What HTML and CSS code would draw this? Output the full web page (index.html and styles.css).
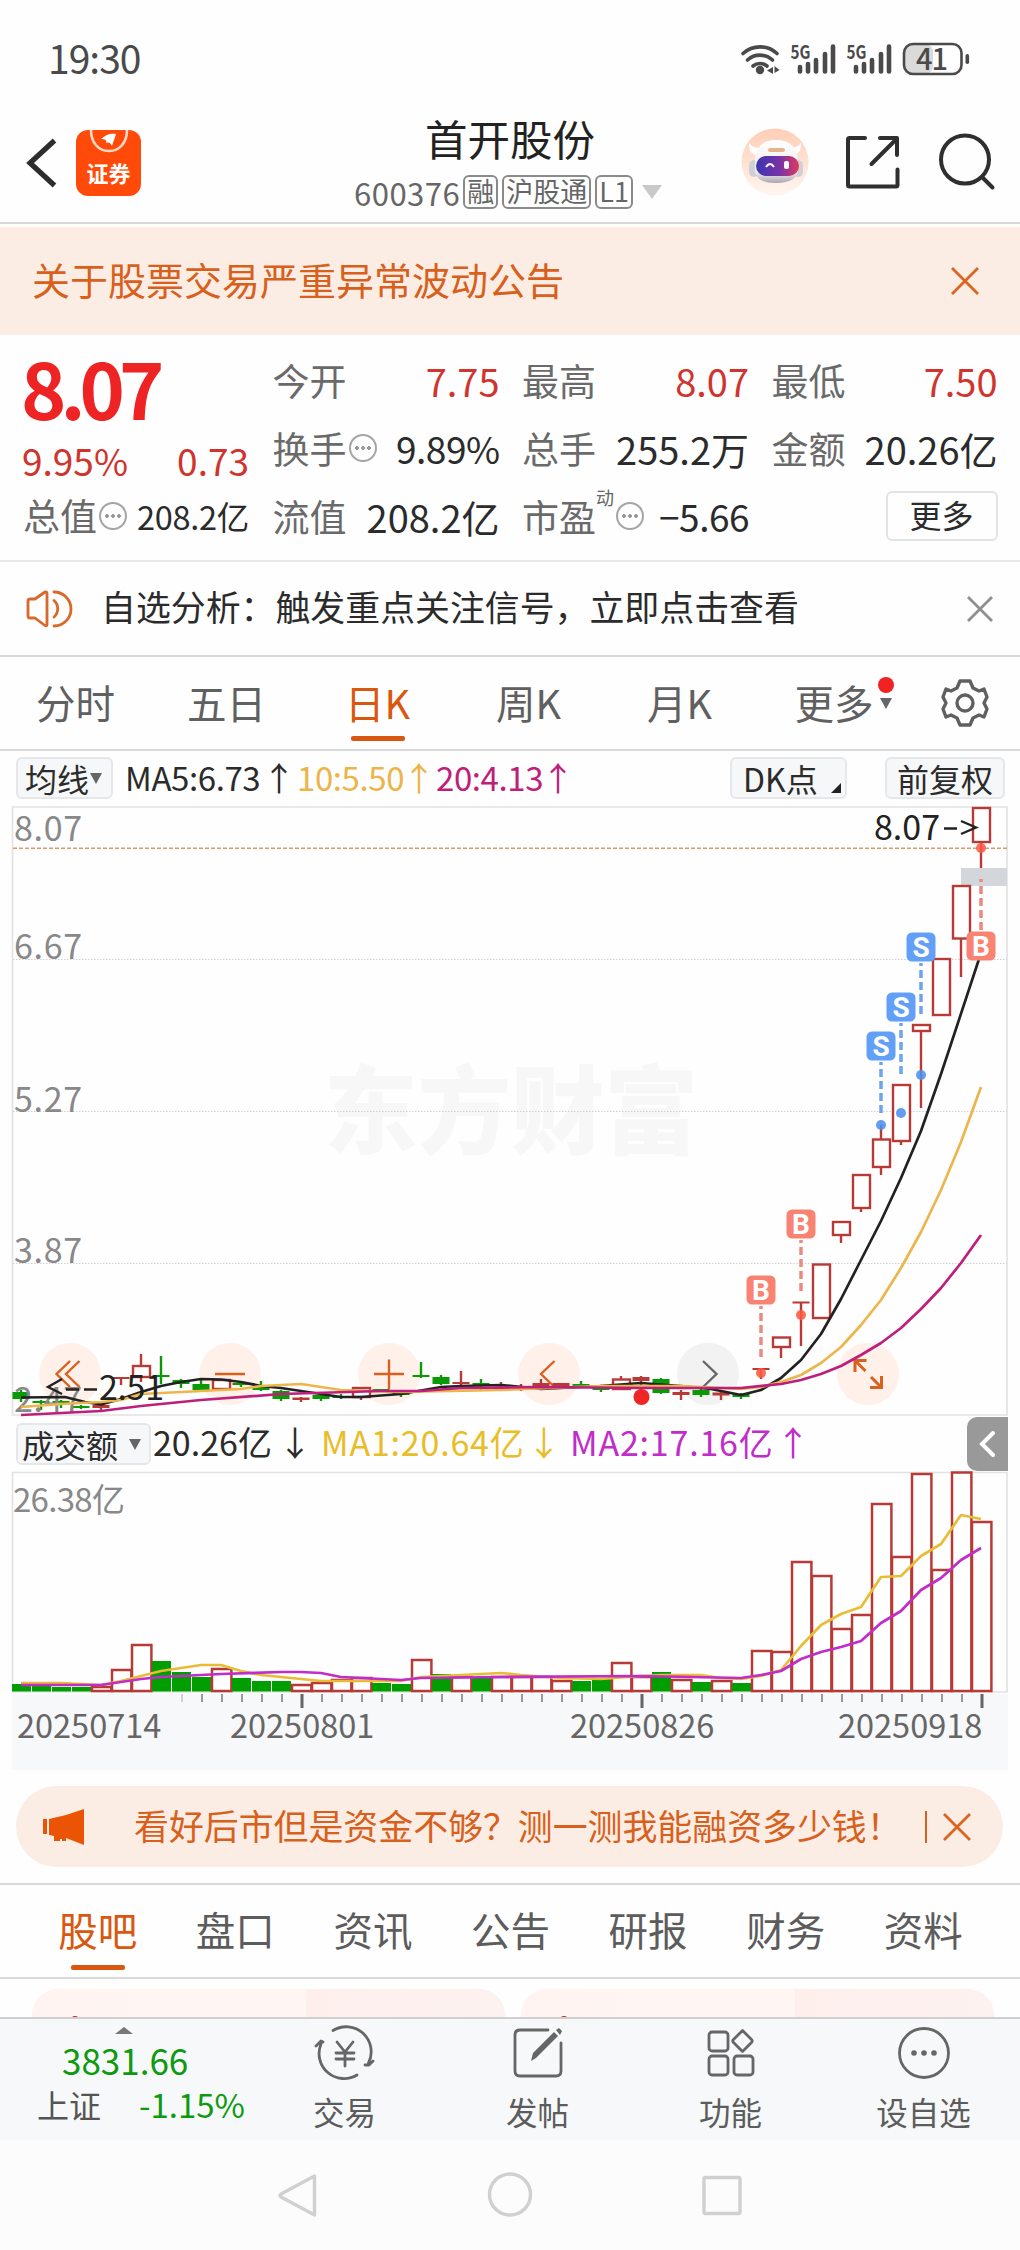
FILE: index.html
```html
<!DOCTYPE html>
<html lang="zh-CN">
<head>
<meta charset="utf-8">
<title>首开股份 600376</title>
<link rel="stylesheet" href="styles.css">
</head>
<body>
<div class="statusbar">
  <span class="clock">19:30</span>
  <svg class="status-icons" width="240" height="52" viewBox="730 28 240 52">
    <g fill="none" stroke="#4a4a4a" stroke-width="3.6" stroke-linecap="round">
      <path d="M743 53.500a25 25 0 0 1 34 0M747.500 60a18.500 18.500 0 0 1 25 0M753 66a11 11 0 0 1 14 0"/>
    </g>
    <circle cx="760" cy="70" r="4.200" fill="#4a4a4a"/>
    <path d="M773 67v7l-6-3.500zM774.500 66v7l5-3z" fill="#4a4a4a"/>
    <g id="sig">
      <text x="790.500" y="58.500" class="five-g" textLength="20" lengthAdjust="spacingAndGlyphs">5G</text>
      <path d="M800 67v4.500M808 64v7.500M816 60v11.500M825 54v17.500M833 46.500v25" stroke="#4a4a4a" stroke-width="4.600" stroke-linecap="round"/>
    </g>
    <use href="#sig" x="56"/>
    <rect x="904" y="44.500" width="29" height="29" rx="7" fill="#dadada"/>
    <rect x="904" y="44" width="57.500" height="30" rx="9" fill="none" stroke="#4a4a4a" stroke-width="2.600"/>
    <rect x="965.500" y="54" width="3.600" height="10" rx="1.800" fill="#4a4a4a"/>
    <text x="916" y="69.500" class="battery">41</text>
  </svg>
</div>

<header class="header">
  <svg class="back" width="34" height="54" viewBox="0 0 34 54"><path d="M29.500 4.500L5 27l24.500 22.500" fill="none" stroke="#2d2d2d" stroke-width="5.200"/></svg>
  <div class="logo">
    <svg width="65" height="28" viewBox="0 0 65 28"><path d="M15 0c0 12 7 21 18 21S51 12 51 0" fill="none" stroke="#ffd9c4" stroke-width="2.600"/><path d="M25 9C30 4 35 3 40 4C39 8 37 12 36 16C34.500 13 33 11.500 30 13C31 10 29 9 25 9z" fill="#fff"/></svg>
    <span>证券</span>
  </div>
  <div class="heading">
    <div class="name">首开股份</div>
    <div class="code"><span class="num">600376</span><span class="tag">融</span><span class="tag">沪股通</span><span class="tag">L1</span><i class="tri-down"></i></div>
  </div>
  <svg class="robot" width="68" height="68" viewBox="0 0 68 68">
    <defs>
      <linearGradient id="halo" x1="0" y1="0" x2="0" y2="1"><stop offset="0" stop-color="#ffcdb5"/><stop offset="1" stop-color="#fff6f1"/></linearGradient>
      <linearGradient id="visor" x1="0" y1="0" x2="1" y2="0"><stop offset="0" stop-color="#3a35b0"/><stop offset=".55" stop-color="#7a32a8"/><stop offset="1" stop-color="#e03a5c"/></linearGradient>
      <linearGradient id="shell" x1="0" y1="0" x2="0" y2="1"><stop offset="0" stop-color="#fff"/><stop offset=".75" stop-color="#efecef"/><stop offset="1" stop-color="#a9a4ad"/></linearGradient>
    </defs>
    <circle cx="34" cy="34" r="33.500" fill="url(#halo)"/>
    <path d="M8 15c0 8 2 11 8 12l5-7c-7 0-10-1-13-5zM60 15c0 8-2 11-8 12l-5-7c7 0 10-1 13-5z" fill="#fff"/>
    <rect x="8" y="32" width="10" height="17" rx="5" fill="#d2cfd4"/><rect x="52" y="32" width="10" height="17" rx="5" fill="#d2cfd4"/>
    <path d="M14 34c0-14 7-22 21-22s22 8 22 22v8c0 8-8 13-22 13S14 50 14 42z" fill="url(#shell)"/>
    <rect x="27" y="20" width="17" height="4" rx="2" fill="#e5b48c"/>
    <rect x="15" y="28" width="43" height="20" rx="10" fill="url(#visor)"/>
    <path d="M25 39q4-6 8 0" fill="none" stroke="#fff" stroke-width="2"/><rect x="43" y="33" width="5" height="8" rx="2" fill="#fff"/>
  </svg>
  <svg class="share" width="60" height="60" viewBox="842 130 60 60"><g fill="none" stroke="#2f2f2f" stroke-width="4" stroke-linecap="round" stroke-linejoin="round"><path d="M865 138h-15.500q-1.500 0-1.500 1.500v45.500q0 1.500 1.500 1.500H896q1.500 0 1.500-1.500V169.500M880 138h17v17M896 139.500L871.500 164"/></g></svg>
  <svg class="search" width="60" height="60" viewBox="938 130 60 60"><g fill="none" stroke="#2f2f2f" stroke-width="4" stroke-linecap="round"><circle cx="965" cy="159.500" r="24"/><path d="M982.500 177.500l10 10"/></g></svg>
</header>

<div class="announce">
  <span>关于股票交易严重异常波动公告</span>
  <svg width="28" height="28" viewBox="0 0 28 28"><path d="M1 1l26 26M27 1L1 27" stroke="#dd6320" stroke-width="2.800"/></svg>
</div>

<section class="quote">
  <div class="col first">
    <div class="price">8.07</div>
    <div class="row red chg"><span>9.95%</span><span>0.73</span></div>
    <div class="row total"><label>总值</label><i class="dots"></i><b class="small">208.2亿</b></div>
  </div>
  <div class="col">
    <div class="row"><label>今开</label><b class="red">7.75</b></div>
    <div class="row"><label>换手</label><i class="dots"></i><b class="rate">9.89%</b></div>
    <div class="row"><label>流值</label><b>208.2亿</b></div>
  </div>
  <div class="col">
    <div class="row"><label>最高</label><b class="red">8.07</b></div>
    <div class="row"><label>总手</label><b>255.2万</b></div>
    <div class="row"><label>市盈</label><sup>动</sup><i class="dots"></i><b class="rate">−5.66</b></div>
  </div>
  <div class="col">
    <div class="row"><label>最低</label><b class="red">7.50</b></div>
    <div class="row"><label>金额</label><b>20.26亿</b></div>
    <div class="row"><span class="more">更多</span></div>
  </div>
</section>

<div class="notice">
  <svg width="48" height="42" viewBox="0 0 48 42"><g fill="none" stroke="#d9692a" stroke-width="2.800" stroke-linejoin="round" stroke-linecap="round"><path d="M20 4L10 11H5q-2 0-2 2v15q0 2 2 2h5l10 7.500q2 1 2-1V5.500q0-2-2-1.500z"/><path d="M29 12.500a11 11 0 0 1 0 16.500M29 4a17 17 0 0 1 0 34"/></g></svg>
  <span>自选分析：触发重点关注信号，立即点击查看</span>
  <svg width="28" height="28" viewBox="0 0 28 28"><path d="M2 2l24 24M26 2L2 26" stroke="#8f8f8f" stroke-width="2.800"/></svg>
</div>

<nav class="periods">
  <span>分时</span><span>五日</span><span class="on">日K</span><span>周K</span><span>月K</span><span class="drop">更多<i class="badge"></i><i class="tri-dark"></i></span>
  <svg width="52" height="52" viewBox="-26 -26 52 52"><g fill="none" stroke="#606060" stroke-width="3.400" stroke-linejoin="round"><path d="M-5-22H5L8-15 14-12 19-14 22-6 19 0 22 6 19 14 14 12 8 15 5 22H-5L-8 15-14 12-19 14-22 6-19 0-22-6-19-14-14-12-8-15z"/><circle r="8"/></g></svg>
</nav>

<section class="chart">
  <div class="legend">
    <span class="chip ma">均线<i class="tri-dark"></i></span>
    <span class="v dark">MA5:6.73<em>↑</em></span><span class="v gold">10:5.50<em>↑</em></span><span class="v pink">20:4.13<em>↑</em></span>
    <span class="chip dk">DK点<i class="corner"></i></span>
    <span class="chip fq">前复权</span>
  </div>
  <svg id="kline" width="1020" height="616" viewBox="0 801 1020 616"></svg>
  <div class="legend vol">
    <span class="chip amt">成交额<i class="tri-dark"></i></span>
    <span class="v dark">20.26亿<em>↓</em></span><span class="v yellow">MA1:20.64亿<em>↓</em></span><span class="v purple">MA2:17.16亿<em>↑</em></span>
    <span class="fold"><svg width="20" height="30" viewBox="0 0 20 30"><path d="M15 4L4 15l11 11" fill="none" stroke="#fff" stroke-width="4" stroke-linecap="round"/></svg></span>
  </div>
  <svg id="volume" width="1020" height="299" viewBox="0 1471 1020 299"></svg>
</section>

<div class="promo">
  <svg width="44" height="38" viewBox="0 0 44 38"><path d="M1 11h4v15H1zM7 11L24 7 42 1v36l-18-7v3h-4v-2h-2v2h-6v-5l-5-1z" fill="#eb5405"/></svg>
  <span>看好后市但是资金不够？测一测我能融资多少钱！</span>
  <i class="bar"></i>
  <svg class="x" width="28" height="28" viewBox="0 0 28 28"><path d="M1 1l26 26M27 1L1 27" stroke="#dd6320" stroke-width="2.800"/></svg>
</div>

<nav class="sections">
  <span class="on">股吧</span><span>盘口</span><span>资讯</span><span>公告</span><span>研报</span><span>财务</span><span>资料</span>
</nav>
<div class="cards"><div class="card"></div><div class="card"></div></div>

<footer class="toolbar">
  <div class="index">
    <i class="tri-up"></i>
    <div class="pts">3831.66</div>
    <div class="line"><span>上证</span><span class="green">-1.15%</span></div>
  </div>
  <div class="item"><svg width="64" height="56" viewBox="-32 -28 64 56"><g fill="none" stroke="#666" stroke-width="2.800" stroke-linecap="round" stroke-linejoin="round"><path d="M-12-22.500A25 25 0 0 1 23.500 10M12 22A25 25 0 0 1-24-9M-29-7l5-5 2 1M20 12l4 0 4-4"/><path d="M-8-11L0-1 8-11M0-1V13M-9 0H9M-9 6H9"/></g></svg><span>交易</span></div>
  <div class="item"><svg width="64" height="56" viewBox="-32 -28 64 56"><g fill="none" stroke="#666" stroke-width="2.800" stroke-linecap="round" stroke-linejoin="round"><path d="M10-23H-18q-5 0-5 5V18q0 5 5 5H18q5 0 5-5V-10"/></g><path d="M-7 8l2-8L16-21l4 4L-2 5zM18-23l3-2 3 3-2 4z" fill="#666"/></svg><span>发帖</span></div>
  <div class="item"><svg width="64" height="56" viewBox="-32 -28 64 56"><g fill="none" stroke="#666" stroke-width="2.800" stroke-linejoin="round"><rect x="-22" y="-21" width="19" height="19" rx="3"/><rect x="-22" y="3" width="19" height="19" rx="3"/><rect x="3" y="3" width="19" height="19" rx="3"/><path d="M11.500-22.500l9 9q1.500 1.500 0 3l-9 9-9-9q-1.500-1.500 0-3z"/></g></svg><span>功能</span></div>
  <div class="item"><svg width="64" height="56" viewBox="-32 -28 64 56"><circle r="24.500" fill="none" stroke="#666" stroke-width="2.800"/><g fill="#666"><circle cx="-10" r="2.800"/><circle r="2.800"/><circle cx="10" r="2.800"/></g></svg><span>设自选</span></div>
</footer>
<div class="sysnav">
  <svg width="1020" height="110" viewBox="0 2140 1020 110"><g fill="none" stroke="#d0d0d0" stroke-width="3.400" stroke-linejoin="round"><path d="M314.500 2176v39L281 2197q-2-1.500 0-3z"/><circle cx="510" cy="2194.500" r="20.500"/><rect x="704" y="2177.500" width="36" height="36" rx="1.500"/></g></svg>
</div>
<script src="chart.js"></script>
</body>
</html>
```
FILE: styles.css
```css
* { box-sizing: border-box; }
body { margin: 0; width: 1020px; height: 2250px; overflow: hidden; background: #fefefe; color: #2b2b2b; font-family: "Noto Sans CJK SC", sans-serif; font-weight: 400; white-space: nowrap; display: flex; flex-direction: column; }
body > * { flex: none; }
svg { display: block; flex: none; overflow: visible; }
i, em { font-style: normal; }
b { font-weight: 400; }
text { font-family: "Noto Sans CJK SC", sans-serif; }
.red { color: #d0342f; }

.statusbar { height: 120px; padding: 28px 50px 0 48px; display: flex; justify-content: space-between; color: #4a4a4a; }
.clock { font-size: 39px; line-height: 44px; letter-spacing: -1px; margin-top: 7px; }
.five-g { font-size: 19px; font-weight: 700; fill: #4a4a4a; }
.battery { font-size: 29px; font-weight: 500; fill: #4a4a4a; letter-spacing: -1px; }

.header { height: 104px; border-bottom: 2px solid #d8d8d8; display: flex; align-items: flex-start; }
.back { margin: 16px 0 0 25px; }
.logo { width: 65px; height: 66px; margin: 10px 0 0 17px; border-radius: 12px; background: #ff4a0a; color: #fff; text-align: center; }
.logo span { display: block; font: 700 22px/28px "Noto Sans CJK SC", sans-serif; }
.heading { width: 380px; margin-left: 179px; }
.name { font-size: 42.500px; line-height: 44px; margin-top: -4px; padding-left: 105px; color: #222; }
.code { display: flex; align-items: center; height: 34px; margin-top: 15px; padding-left: 34px; color: #666; }
.code .num { font-size: 31px; letter-spacing: .5px; margin-right: 3px; }
.tag { font-size: 27px; line-height: 28px; height: 34px; border: 2px solid #8a8a8a; border-radius: 6px; padding: 0 2px; margin-right: 4px; }
.tri-down { border: 10px solid transparent; border-top: 14px solid #c9c9c9; border-bottom: 0; margin-left: 5px; }
.robot { margin: 8px 0 0 41px; }
.share { margin: 10px 0 0 33px; }
.search { margin: 10px 0 0 36px; }

.announce { height: 108px; margin-top: 3px; background: #fcede4; color: #d8601c; font-size: 38px; display: flex; align-items: center; justify-content: space-between; padding: 0 41px 0 32px; }
.announce span { margin-bottom: 5px; }

.quote { height: 227px; border-bottom: 2px solid #e8e8e8; display: grid; grid-template-columns: 227px 227px 227px 226px; column-gap: 22.500px; padding: 11px 0 0 23px; }
.row { height: 68px; display: flex; align-items: center; font-size: 37px; line-height: 67px; }
.row b { margin-left: auto; font-size: 38px; }
.row .small { font-size: 32.500px; letter-spacing: -.3px; }
.row .rate { font-size: 37px; letter-spacing: -.5px; }
.row label { color: #6a6a6a; }
.first { width: 226px; }
.price { color: #ee2424; font-size: 77px; font-weight: 700; line-height: 81px; height: 81px; letter-spacing: -6px; margin-left: -2px; }
.chg { justify-content: space-between; height: 66px; line-height: 64px; margin-left: -1px; }
.total { height: 45px; line-height: 45px; }
.dots { width: 28px; height: 28px; margin-left: 2px; border: 2px solid #a5a5a5; border-radius: 50%; background: radial-gradient(circle 2px, #999 90%, transparent) center / 6px 100% no-repeat, radial-gradient(circle 2px, #999 90%, transparent) 3px center / 6px 100% no-repeat, radial-gradient(circle 2px, #999 90%, transparent) 15px center / 6px 100% no-repeat; }
sup { font-size: 18px; line-height: 20px; align-self: flex-start; margin-top: 5px; color: #666; }
sup + .dots { margin-left: 2px; }
.more { margin-left: auto; width: 112px; height: 50px; border: 2px solid #e2e3e5; border-radius: 6px; font-size: 32px; line-height: 42px; text-align: center; }

.notice { height: 95px; border-bottom: 2px solid #d9d9d9; display: flex; align-items: center; padding: 0 26px 0 25px; font-size: 34.900px; }
.notice span { margin: 0 auto 5px 28px; }

.periods { height: 94px; border-bottom: 2px solid #d9d9d9; display: flex; align-items: center; color: #606060; font-size: 39.500px; }
.periods > span { width: 151px; text-align: center; margin-bottom: 4px; }
.on { color: #d9570f; position: relative; }
.on::after { content: ""; position: absolute; left: 50%; margin-left: -27px; bottom: -11px; width: 54px; height: 5px; border-radius: 2px; background: #d9570f; }
.periods .drop { position: relative; width: 158px; }
.badge { position: absolute; left: 123px; top: 4px; width: 16px; height: 16px; border-radius: 50%; background: #f02222; }
.drop .tri-dark { position: absolute; left: 125px; top: 25px; }
.periods svg { margin-left: 26px; }
.tri-dark { border: 6.500px solid transparent; border-top: 11px solid #666; border-bottom: 0; }

.chart { height: 1019px; }
.legend { height: 50px; display: flex; align-items: center; padding: 4px 0 0 16px; font-size: 33px; line-height: 40px; }
.chip { display: flex; align-items: center; height: 42px; font-size: 32px; background: #f6f7f9; border: 2px solid #e6e7ea; border-radius: 6px; line-height: 38px; }
.chip.ma { width: 97px; padding-left: 7px; gap: 1px; }
.dk { width: 117px; margin-left: auto; padding-left: 11px; position: relative; }
.fq { width: 120px; margin: 0 15px 0 38px; padding-left: 10px; }
.corner { position: absolute; right: 4px; bottom: 4px; border: 5.500px solid #222; border-top-color: transparent; border-left-color: transparent; }
.v { display: flex; align-items: center; justify-content: space-between; letter-spacing: -.4px; margin-bottom: 3px; }
.v em { width: 18px; display: flex; justify-content: center; letter-spacing: 0; }
.dark { margin-left: 12px; width: 163px; }
.gold { color: #edb44a; margin-left: 9px; width: 131px; }
.pink { color: #bd1f7b; margin-left: 8px; width: 131px; }
.vol { height: 54px; font-size: 34px; padding-top: 0; }
.vol .v { margin-bottom: 5px; }
.amt { width: 135px; padding-left: 4px; gap: 11px; }
.vol .chip { margin-bottom: 0; }
.vol .dark { margin-left: 2px; width: 151px; letter-spacing: 0; }
.yellow { color: #e8bd28; margin-left: 17px; width: 232px; }
.purple { color: #c02dc8; margin-left: 17px; width: 232px; }
.vol .yellow, .vol .purple { letter-spacing: .8px; }
.fold { width: 41px; height: 54px; margin: 0 12px 0 auto; border-radius: 10px 0 0 10px; background: #999; display: flex; align-items: center; justify-content: center; }

.promo { height: 81px; margin: 16px 17px 0 16px; border-radius: 41px; background: #fcede4; color: #d8601c; display: flex; align-items: center; font-size: 34.900px; padding-left: 26px; }
.promo > span { margin: 0 0 4px 48px; width: 792px; }
.bar { width: 1.500px; height: 32px; background: #d8601c; margin-left: -1px; }
.x { margin-left: 16px; }
.sections { height: 96px; margin-top: 16px; border-top: 2px solid #d9d9d9; border-bottom: 2px solid #d9d9d9; display: flex; align-items: center; color: #5c5c5c; font-size: 39.500px; padding: 0 28px 0 29px; }
.sections span { flex: 1; text-align: center; margin-bottom: 5px; }
.sections .on::after { bottom: -13px; }
.cards { height: 38px; overflow: hidden; display: flex; gap: 16px; padding: 10px 26px 0 32px; }
.card { flex: 1; height: 80px; border-radius: 26px; background: radial-gradient(circle 9px at 43px 36px, #c33 95%, transparent), linear-gradient(90deg, #fff4f2, #fff6f4 58%, #feefed 58%, #fdf2f0); }
.toolbar { height: 123px; background: #f6f8fa; border-top: 2px solid #cfcfcf; display: flex; }
.index { width: 248px; position: relative; }
.tri-up { position: absolute; left: 115px; top: 8px; border: 9px solid transparent; border-top: 0; border-bottom: 7px solid #777; }
.pts { color: #0e9a0e; font-size: 35px; line-height: 40px; margin: 21px 0 0 62px; }
.line { display: flex; justify-content: space-between; align-items: center; font-size: 32px; line-height: 40px; margin: 4px 3px 0 37px; color: #555; }
.green { color: #0e9a0e; font-size: 33px; }
.item { width: 193px; text-align: center; display: flex; flex-direction: column; align-items: center; padding-top: 6px; color: #5c5c5c; font-size: 31.500px; }
.item span { line-height: 40px; margin-top: 10px; }
.sysnav { height: 110px; background: #fcfcfc; }

.axis { font-size: 34px; fill: #888; letter-spacing: .7px; }
.amount { font-size: 33px; fill: #888; letter-spacing: -.7px; }
.date { font-size: 32.500px; fill: #666; }
.mark { font-size: 34px; fill: #222; }
.sig { font-size: 28px; font-weight: 700; fill: #fff; text-anchor: middle; font-family: Roboto, "Liberation Sans", sans-serif; }
.watermark { font-size: 96px; font-weight: 900; fill: #f7f7f7; }
```
FILE: chart.js
```js
const RED = '#b83a36', GREEN = '#0a9a08';
const X = k => 21 + 20 * k;

// [colour, body top, body bottom, wick top, wick bottom]
const candles = [
  ['g',1392,1399,1390,1402],['g',1401,1403,1400,1410],['g',1401,1403,1400,1408],['g',1406,1408,1405,1409],
  ['r',1405,1408,1405,1410],['r',1377,1379,1377,1385],['r',1366,1377,1354,1382],['g',1375,1377,1356,1384],
  ['g',1380,1384,1379,1388],['g',1384,1390,1380,1391],['r',1380,1389,1379,1389],['g',1383,1385,1381,1387],
  ['g',1387,1390,1381,1391],['g',1391,1399,1390,1401],['r',1397.5,1400,1397,1402],['g',1395,1399,1395,1401],
  ['g',1396,1398,1394,1399],['r',1388,1397,1387,1400],['g',1389,1391,1389,1392],['g',1393,1395,1392,1397],
  ['g',1375,1377,1362,1378],['g',1377,1384,1375,1385],['r',1382,1384,1371,1385],['g',1383,1386,1379,1391],
  ['r',1388,1391,1382,1391],['r',1386,1388,1384,1391],['r',1383,1386,1379,1387],['r',1383,1386,1383,1387],
  ['g',1384,1386,1381,1387],['g',1388,1390,1388,1392],['r',1379.5,1389,1376,1389],['r',1377,1381,1376,1393],
  ['g',1379,1393,1378,1394],['r',1392,1395,1390,1400],['g',1390,1395,1389,1397],['r',1392.5,1395.5,1392,1400],
  ['g',1394,1397,1393,1399],['r',1368,1370,1368,1379],['r',1337.5,1347,1337,1358],['r',1301.5,1303.5,1302,1346],
  ['r',1264.5,1318,1265,1318],['r',1222,1235,1222,1243],['r',1175,1208,1175,1212],['r',1139.5,1167,1125,1175],
  ['r',1085,1141,1085,1145],['r',1025,1031,1025,1108],['r',959,1015,959,1015],['r',886,938.5,886,977],
  ['r',808,842,808,868]
];

const poly = (pts, color) => `<polyline points="${pts}" fill="none" stroke="${color}" stroke-width="2.7" stroke-linejoin="round"/>`;

function candle([c, t, b, wt, wb], k) {
  const x = X(k), col = c === 'g' ? GREEN : RED;
  if (c === 'g' || b - t < 5) {
    const l = Math.max(12.5, x - 8.5);
    return `<path d="M${x} ${wt}V${wb}" stroke="${col}" stroke-width="2.4"/><rect x="${l}" y="${t}" width="${x + 8.5 - l}" height="${b - t}" fill="${col}"/>`;
  }
  return `<path d="M${x} ${wt}V${t}M${x} ${b}V${wb}" stroke="${col}" stroke-width="2.4"/><rect x="${x - 8}" y="${t}" width="17" height="${b - t}" fill="#fff" stroke="${col}" stroke-width="2.4"/>`;
}

function signal(letter, k, cy, from, to, dot) {
  const x = X(k), col = letter === 'S' ? '#62a0f8' : '#f98372';
  return `<path d="M${x} ${from}V${to}" stroke="${letter === 'S' ? '#6da4ef' : '#ea8a80'}" stroke-width="3.5" stroke-dasharray="8 4" stroke-dashoffset="5"/>` +
    `<rect x="${x - 14.5}" y="${cy - 14.5}" width="29" height="29" rx="5.5" fill="${col}"/><text class="sig" x="${x}" y="${cy + 10}">${letter}</text>` +
    `<circle cx="${x}" cy="${dot}" r="5" fill="${letter === 'S' ? '#4d8ff0' : '#fb5a43'}" fill-opacity=".88"/>`;
}

let s = '<text class="watermark" x="324" y="1146" textLength="374" lengthAdjust="spacingAndGlyphs">东方财富</text>';
s += '<path d="M12.5 807H1007V1415H12.5z" fill="none" stroke="#e2e2e2" stroke-width="1.6"/>';
for (const y of [959.5, 1111.5, 1263.5]) s += `<path d="M13 ${y}H1007" stroke="#d2d2d2" stroke-width="1" stroke-dasharray="1.5 1.5"/>`;
s += `<path d="M13 848.3H1007" stroke="#d99a70" stroke-width="1.6" stroke-dasharray="4 2"/>`;
for (const x of [70, 230, 389, 549, 868]) s += `<circle cx="${x}" cy="1374" r="31" fill="#fff1ea"/>`;
s += '<circle cx="708" cy="1374" r="31" fill="#f2f2f2"/><rect x="961" y="868" width="46" height="18" fill="#d3d7db"/>';
s += '<g fill="none" stroke="#d9601e" stroke-width="2.4"><path d="M70 1361L56.500 1374L70 1387M79.500 1361L66 1374L79.500 1387M215 1374H245M374 1374H404M389 1359.500V1389M554.500 1361L541 1374L554.500 1387"/><path stroke-width="3" d="M866.500 1360.500H855V1372M856 1361.500L865.500 1371M870 1387.500H881.500V1376M871 1377L881 1387"/></g><path d="M703 1361L716.500 1374L703 1387" fill="none" stroke="#666" stroke-width="2.4"/>';
s += candles.map(candle).join('');
for (const [t, y] of [['8.07',841],['6.67',959],['5.27',1112],['3.87',1263],['2.47',1411.5]]) s += `<text class="axis" x="14" y="${y}">${t}</text>`;
s += poly('21,1397.500 65,1397 85,1402 101,1404.500 121,1399 141,1392 161,1386 181,1382 201,1379 221,1379.500 241,1382 261,1386 281,1388 321,1394 341,1397 361,1397 401,1394 441,1387 461,1386 501,1385 541,1389 600,1386 641,1383 681,1386 711,1389 741,1395 761,1390 781,1378 801,1360 821,1334 841,1299 861,1260 881,1221 901,1178 921,1131 941,1074 950,1047 981,953', '#222');
s += poly('21,1407 61,1404 101,1402 121,1400 141,1394 201,1391 241,1389 261,1386 301,1384 321,1387 341,1390 401,1392 501,1390 601,1386 681,1386 741,1389 761,1387 781,1382 801,1375 821,1363 841,1347 861,1325 881,1300 901,1268 921,1232 941,1190 961,1142 981,1087', '#edb64c');
s += poly('21,1415 61,1413 101,1411 141,1406 201,1400 281,1394 381,1391 421,1391 461,1388 541,1387 641,1388 741,1388 781,1384 801,1380 821,1374 841,1366 861,1355 881,1343 901,1328 921,1309 941,1288 961,1263 981,1235', '#bd1f7b');
s += signal('S',45,947,963,1014,1075) + signal('S',44,1007,1023,1074,1113) + signal('S',43,1046,1062,1113,1125);
s += signal('B',48,946,879,930,848) + signal('B',39,1224,1240,1291,1315) + signal('B',37,1290,1306,1357,1373);
s += '<circle cx="641.500" cy="1397" r="8" fill="#f02525"/>';
s += '<text class="mark" x="874" y="840" textLength="66">8.07</text><path d="M944 828.5H957M961 821L976 827.500L961 834M62 1379L48 1387L62 1394M66 1389.500H79M84 1389.500H97" fill="none" stroke="#222" stroke-width="2.400"/><text class="mark" x="99" y="1400" textLength="65">2.51</text>';
document.getElementById('kline').innerHTML = s;

const tops = [1684,1686,1687,1687,1687,1670,1645,1661,1672,1677,1669,1678,1681,1681,1685,1683,1680,1678,1683,1684,1660,1674,1677,1678,1677,1677,1677,1681,1681,1679,1663,1677,1672,1680,1682,1681,1683,1651,1652,1562,1576,1629,1615,1504,1557,1474,1570,1472.5,1522];
const down = new Set([0,1,2,3,7,8,9,11,12,13,18,19,21,23,28,29,32,34,36]);
let v = '<path d="M12.500 1472.500H1007V1692H12.500z" fill="none" stroke="#e2e2e2" stroke-width="1.6"/><rect x="12" y="1694" width="996" height="76" fill="#f7f8fa"/><text class="amount" x="13" y="1512">26.38亿</text>';
tops.forEach((t, k) => {
  const x = X(k);
  v += down.has(k)
    ? `<rect x="${Math.max(12, x - 9)}" y="${t}" width="19" height="${1691.5 - t}" fill="#009e00"/>`
    : `<rect x="${x - 9}" y="${t}" width="19.4" height="${1691 - t}" fill="#fff" stroke="${RED}" stroke-width="2.5"/>`;
});
v += poly('21,1683 61,1683 101,1685 121,1681 141,1676 161,1671 201,1665 221,1665 241,1671 261,1675 301,1679 321,1681 401,1681 421,1677 461,1675 501,1673 521,1675 561,1678 601,1679 641,1676 661,1675 701,1675 721,1678 741,1679 761,1676 781,1670 801,1646 821,1625 841,1614 861,1607 881,1577 901,1576 921,1556 941,1544 961,1515 981,1519', '#e8bd35');
v += poly('21,1685 101,1685 121,1682 141,1679 161,1677 201,1675 221,1674 281,1672 301,1672 321,1673 341,1677 401,1680 421,1678 501,1677 641,1676 741,1678 761,1675 781,1671 801,1659 821,1652 841,1647 861,1641 881,1623 901,1611 921,1590 941,1578 961,1560 981,1548', '#c02dc8');
for (let k = 8; k < 49; k++) {
  const major = k === 14 || k === 31 || k === 48;
  v += `<path d="M${X(k) + 1} 1694V${major ? 1708 : 1702}" stroke="${k === 8 ? '#d0d0d0' : major ? '#666' : '#999'}" stroke-width="${major ? 3 : 2}"/>`;
}
for (const [t, x] of [['20250714',17],['20250801',230],['20250826',570],['20250918',838]]) v += `<text class="date" x="${x}" y="1738">${t}</text>`;
document.getElementById('volume').innerHTML = v;
```
